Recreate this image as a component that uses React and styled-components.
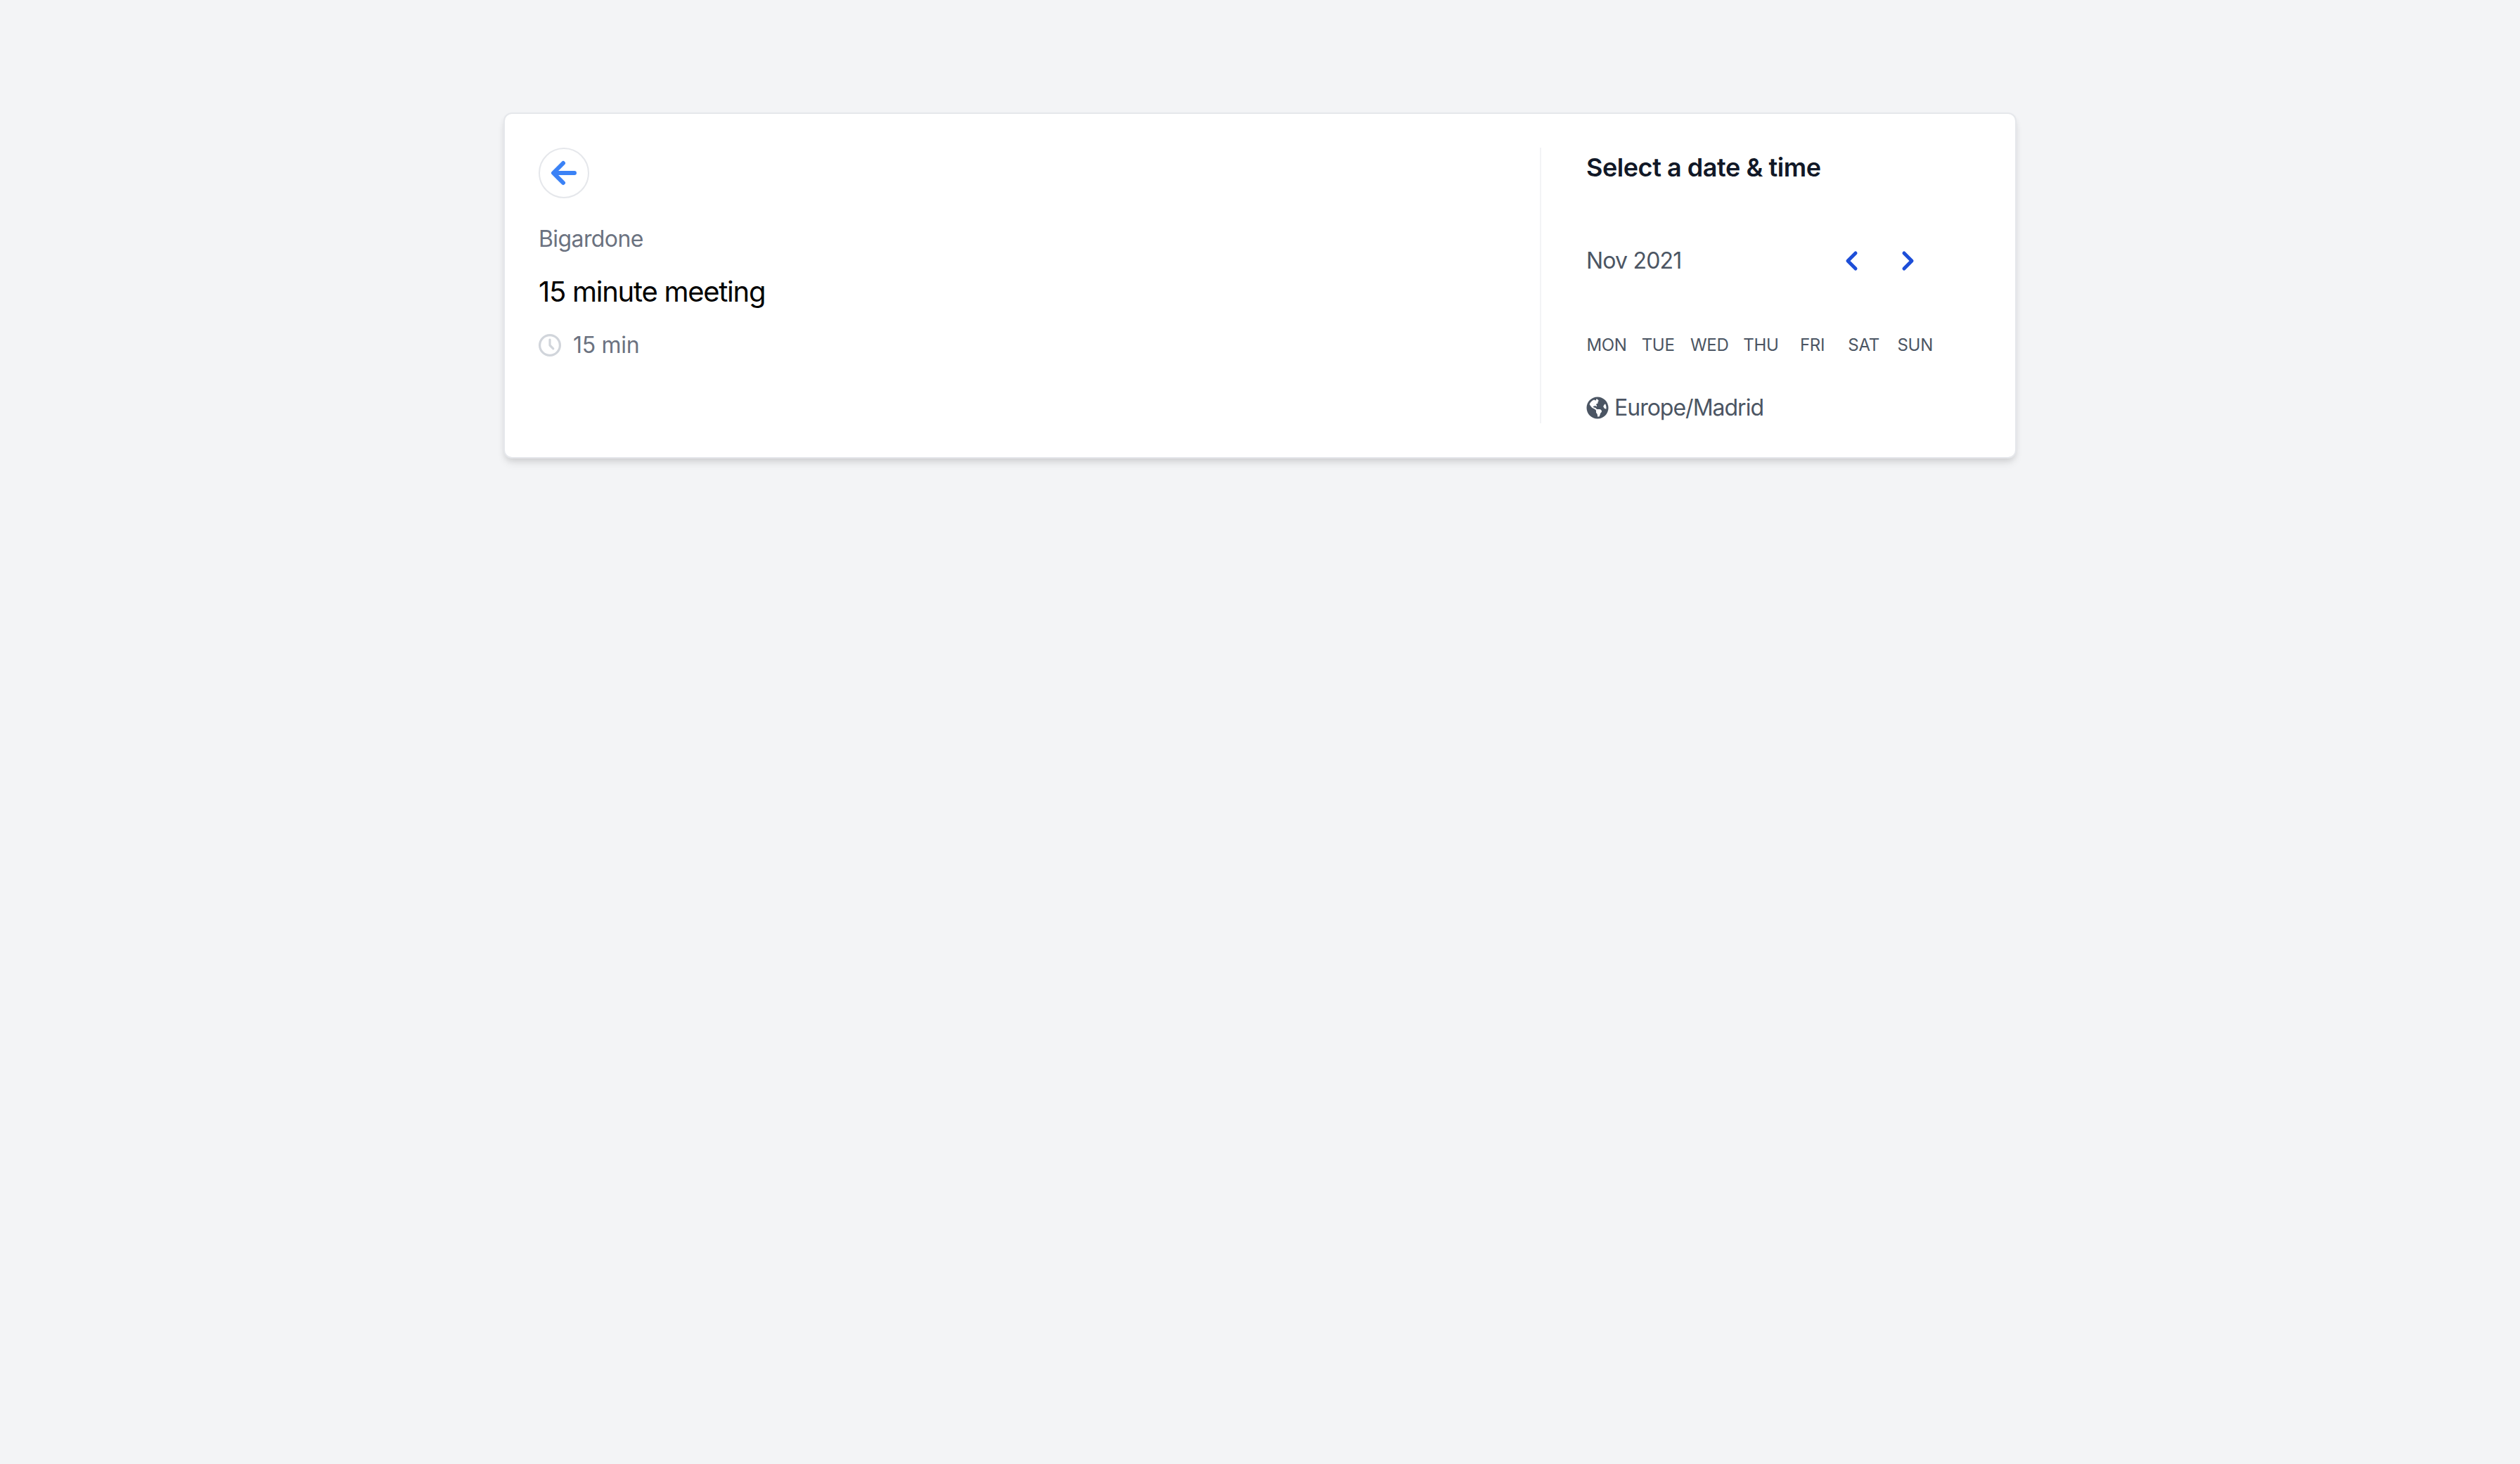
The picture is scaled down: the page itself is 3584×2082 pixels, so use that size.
import React from 'react';
import styled, { createGlobalStyle } from 'styled-components';
import { FaGlobeAmericas } from 'react-icons/fa';

const days = ['MON', 'TUE', 'WED', 'THU', 'FRI', 'SAT', 'SUN'];

function App() {
  return (
    <>
      <GlobalStyle />
      <Page>
        <Card>
          <Details>
            <BackButton aria-label="Back">
              <svg width="40" height="40" viewBox="0 0 40 40" fill="none" stroke="#3b82f6" strokeWidth="6" strokeLinecap="round" strokeLinejoin="round">
                <path d="M35 20H6M19 6L5 20l14 14" />
              </svg>
            </BackButton>
            <Owner>Bigardone</Owner>
            <Title>15 minute meeting</Title>
            <Duration>
              <svg width="32" height="32" viewBox="2 2 20 20" fill="none" stroke="#d1d5db" strokeWidth="2" strokeLinecap="round" strokeLinejoin="round">
                <circle cx="12" cy="12" r="9" />
                <path d="M12 7v5l3 3" />
              </svg>
              <span>15 min</span>
            </Duration>
          </Details>
          <Picker>
            <Heading>Select a date &amp; time</Heading>
            <MonthRow>
              <Month>Nov 2021</Month>
              <MonthNav>
                <NavButton aria-label="Previous month">
                  <svg width="24" height="32" viewBox="0 0 24 32" fill="none" stroke="#1d4ed8" strokeWidth="5" strokeLinecap="round" strokeLinejoin="round">
                    <path d="M17 5L6 16l11 11" />
                  </svg>
                </NavButton>
                <NavButton aria-label="Next month">
                  <svg width="24" height="32" viewBox="0 0 24 32" fill="none" stroke="#1d4ed8" strokeWidth="5" strokeLinecap="round" strokeLinejoin="round">
                    <path d="M7 5l11 11L7 27" />
                  </svg>
                </NavButton>
              </MonthNav>
            </MonthRow>
            <DayRow>
              {days.map((day) => (
                <DayName key={day}>{day}</DayName>
              ))}
            </DayRow>
            <Zone>
              <FaGlobeAmericas size={32} color="#4b5563" />
              <span>Europe/Madrid</span>
            </Zone>
          </Picker>
        </Card>
      </Page>
    </>
  );
}

export default App;

const GlobalStyle = createGlobalStyle`
  html, body {
    margin: 0;
    background: #f3f4f6;
  }
  body {
    font-family: Inter, "Liberation Sans", sans-serif;
  }
`;

const Page = styled.div`
  min-height: 2082px;
  padding-top: 160px;
  box-sizing: border-box;
  background: #f3f4f6;
`;

const Card = styled.div`
  display: flex;
  box-sizing: border-box;
  width: 2152px;
  height: 492px;
  margin: 0 auto;
  padding: 48px;
  background: #fff;
  border: 2px solid #e5e7eb;
  border-radius: 12px;
  box-shadow: 0 8px 12px -2px rgba(0, 0, 0, 0.1), 0 4px 8px -2px rgba(0, 0, 0, 0.08);
`;

const Details = styled.div`
  display: flex;
  flex-direction: column;
  flex: 1;
  border-right: 2px solid #f3f4f6;
`;

const BackButton = styled.button`
  display: flex;
  align-items: center;
  justify-content: center;
  box-sizing: border-box;
  width: 72px;
  height: 72px;
  padding: 0;
  background: #fff;
  border: 2px solid #e5e7eb;
  border-radius: 50%;
`;

const Owner = styled.p`
  margin: 34px 0 0;
  font-size: 32px;
  line-height: 48px;
  letter-spacing: -0.6px;
  color: #6b7280;
`;

const Title = styled.h1`
  margin: 23px 0 0;
  font-size: 40px;
  line-height: 56px;
  font-weight: 400;
  letter-spacing: -1.27px;
  color: #000;
`;

const Duration = styled.div`
  display: flex;
  align-items: center;
  gap: 17px;
  margin-top: 24px;
  font-size: 32px;
  line-height: 48px;
  letter-spacing: -0.3px;
  color: #6b7280;
`;

const Picker = styled.div`
  display: flex;
  flex-direction: column;
  width: 626px;
  padding-left: 64px;
  box-sizing: border-box;
`;

const Heading = styled.h2`
  margin: 0;
  font-size: 36px;
  line-height: 56px;
  font-weight: 600;
  letter-spacing: -0.45px;
  color: #111827;
`;

const MonthRow = styled.div`
  display: flex;
  align-items: center;
  justify-content: space-between;
  width: 512px;
  margin-top: 81px;
`;

const Month = styled.span`
  font-size: 32px;
  line-height: 48px;
  letter-spacing: -0.8px;
  color: #4b5563;
`;

const MonthNav = styled.div`
  display: flex;
  gap: 55px;
  margin-right: 43px;
`;

const NavButton = styled.button`
  display: flex;
  padding: 0;
  background: none;
  border: 0;
`;

const DayRow = styled.div`
  display: grid;
  grid-template-columns: repeat(7, 58px);
  column-gap: 15.14px;
  margin-top: 80px;
`;

const DayName = styled.span`
  font-size: 24px;
  line-height: 32px;
  text-align: center;
  white-space: nowrap;
  letter-spacing: -0.3px;
  color: #4b5563;
`;

const Zone = styled.div`
  display: flex;
  align-items: center;
  gap: 8px;
  margin-top: 49px;
  font-size: 32px;
  line-height: 48px;
  letter-spacing: -1px;
  color: #4b5563;
`;
